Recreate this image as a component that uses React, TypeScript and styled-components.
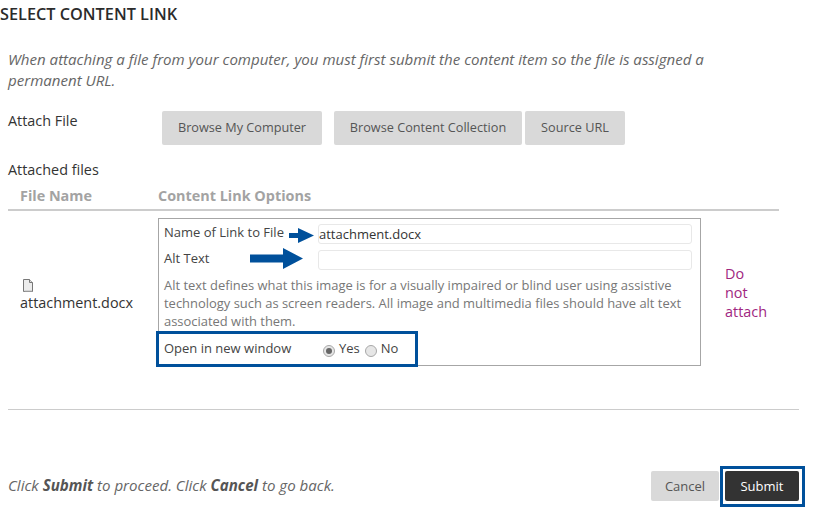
import React from 'react';
import styled, { createGlobalStyle } from 'styled-components';

const Global = createGlobalStyle`
  html, body {
    margin: 0;
    background: #fff;
    font-family: "Open Sans", "Liberation Sans", sans-serif;
  }
`;

const Page = styled.div`
  width: 822px;
  height: 520px;
  overflow: hidden;
  position: relative;
  color: #333;
`;

const Title = styled.h1`
  margin: 0;
  padding-top: 5px;
  font-size: 16.3px;
  line-height: 19px;
  font-weight: 600;
  color: #2b2b2b;
`;

const Intro = styled.p`
  margin: 25px 0 0 8px;
  width: 720px;
  font-size: 15.07px;
  line-height: 21px;
  font-style: italic;
  color: #666;
`;

const AttachRow = styled.div`
  display: flex;
  align-items: flex-start;
  margin: 20px 0 0 8px;
`;

const FieldLabel = styled.div`
  width: 154px;
  font-size: 14.4px;
  line-height: 20px;
  color: #333;
`;

const AttachButtons = styled.div`
  display: flex;
  gap: 12px;
`;

const GreyButton = styled.button<{ $width: number; $tight?: boolean }>`
  width: ${p => p.$width}px;
  height: 34px;
  margin-left: ${p => (p.$tight ? -9 : 0)}px;
  padding: 0 0 2px;
  border: none;
  border-radius: 2px;
  background: #d9d9d9;
  color: #555;
  font: 12.7px "Open Sans", sans-serif;
`;

const AttachedLabel = styled(FieldLabel)`
  margin: 15px 0 0 8px;
  width: auto;
`;

const HeaderRow = styled.div`
  display: flex;
  align-items: center;
  height: 28px;
  margin: 1px 43px 0 8px;
  padding-left: 12px;
  border-bottom: 2px solid #ccc;
  font-size: 14.4px;
  font-weight: 700;
  color: #a3a3a3;
`;

const NameHeader = styled.div`
  width: 138px;
`;

const FileRow = styled.div`
  display: flex;
  align-items: flex-start;
  margin: 7px 0 0 20px;
`;

const FileCell = styled.div`
  width: 138px;
  padding-top: 61px;
  font-size: 14.4px;
  line-height: 20px;
  color: #333;
`;

const FileIcon = styled.svg`
  display: block;
  width: 12px;
  height: 13px;
  margin: 0 0 1px 2px;
`;

const OptionsBox = styled.div`
  position: relative;
  box-sizing: border-box;
  width: 543px;
  height: 148px;
  border: 1px solid #a6a6a6;
  padding: 5px 8px 0 5px;
  font-size: 13px;
  color: #444;
`;

const OptionRow = styled.div`
  display: flex;
  align-items: center;
  height: 20px;
  margin-bottom: 6px;
`;

const OptionLabel = styled.div`
  width: 154px;
  margin-top: -3px;
  line-height: 17px;
`;

const TextBox = styled.div`
  box-sizing: border-box;
  flex: 1;
  height: 20px;
  border: 1px solid #e8e8e8;
  border-radius: 3px;
  font-size: 13px;
  line-height: 19px;
  color: #333;
`;

const Help = styled.p`
  margin: 1px 0 0;
  font-size: 12.95px;
  line-height: 18px;
  color: #777;
`;

const Arrow = styled.svg<{ $left: number; $top: number; $width: number; $height: number }>`
  position: absolute;
  left: ${p => p.$left}px;
  top: ${p => p.$top}px;
  width: ${p => p.$width}px;
  height: ${p => p.$height}px;
`;

const WindowRow = styled.div`
  position: absolute;
  left: -3px;
  top: 112px;
  box-sizing: border-box;
  width: 262px;
  height: 36px;
  border: 3px solid #00509b;
  background: #fff;
  display: flex;
  align-items: center;
  padding: 0 0 3px 5px;
  font-size: 13px;
  color: #444;
`;

const WindowLabel = styled.div`
  width: 159px;
`;

const RadioLabel = styled.div`
  display: flex;
  align-items: center;
  margin-right: 5px;
`;

const Radio = styled.span<{ $on?: boolean }>`
  position: relative;
  top: 3px;
  box-sizing: border-box;
  width: 12px;
  height: 12px;
  margin-right: 4px;
  border: 1px solid #a8a8a8;
  border-radius: 50%;
  background: #e6e6e6;
  display: flex;
  align-items: center;
  justify-content: center;
  &::after {
    content: '';
    display: ${p => (p.$on ? 'block' : 'none')};
    width: 6px;
    height: 6px;
    border-radius: 50%;
    background: #666;
  }
`;

const RemoveLink = styled.div`
  width: 44px;
  margin: 46px 0 0 24px;
  font-size: 14.4px;
  line-height: 19px;
  color: #a0267f;
`;

const Divider = styled.hr`
  margin: 43px 23px 0 8px;
  border: none;
  border-top: 1px solid #ccc;
`;

const Footer = styled.div`
  display: flex;
  align-items: center;
  justify-content: space-between;
  margin: 61px 23px 0 8px;
  height: 30px;
`;

const FooterNote = styled.div`
  margin-top: -3px;
  font-size: 15.1px;
  font-style: italic;
  color: #666;
  b {
    font-weight: 700;
    color: #555;
  }
`;

const FooterActions = styled.div`
  display: flex;
  gap: 6px;
`;

const SubmitButton = styled.button`
  position: relative;
  width: 74px;
  height: 30px;
  padding: 0;
  border: none;
  border-radius: 2px;
  background: #333;
  color: #fff;
  font: 13px "Open Sans", sans-serif;
  &::after {
    content: '';
    position: absolute;
    inset: -5px -6px -6px -5px;
    border: 3px solid #00509b;
  }
`;

const CancelButton = styled(GreyButton)`
  height: 30px;
  padding: 0;
  font-size: 13px;
`;

const App: React.FC = () => (
  <Page>
    <Global />
    <Title>SELECT CONTENT LINK</Title>
    <Intro>
      When attaching a file from your computer, you must first submit the content item so the file
      is assigned a permanent URL.
    </Intro>
    <AttachRow>
      <FieldLabel>Attach File</FieldLabel>
      <AttachButtons>
        <GreyButton $width={160}>Browse My Computer</GreyButton>
        <GreyButton $width={188}>Browse Content Collection</GreyButton>
        <GreyButton $width={100} $tight>Source URL</GreyButton>
      </AttachButtons>
    </AttachRow>
    <AttachedLabel>Attached files</AttachedLabel>
    <HeaderRow>
      <NameHeader>File Name</NameHeader>
      <div>Content Link Options</div>
    </HeaderRow>
    <FileRow>
      <FileCell>
        <FileIcon viewBox="0 0 12 13">
          <path d="M1.5.5h6l3 3v9h-9z" fill="#ececec" stroke="#777" />
          <path d="M7.5.5v3h3" fill="#ddd" stroke="#777" />
          <path d="M2.5 12h7.5" stroke="#bbb" />
        </FileIcon>
        attachment.docx
      </FileCell>
      <OptionsBox>
        <OptionRow>
          <OptionLabel>Name of Link to File</OptionLabel>
          <TextBox>attachment.docx</TextBox>
        </OptionRow>
        <OptionRow>
          <OptionLabel>Alt Text</OptionLabel>
          <TextBox />
        </OptionRow>
        <Help>
          Alt text defines what this image is for a visually impaired or blind user using assistive
          technology such as screen readers. All image and multimedia files should have alt text
          associated with them.
        </Help>
        <Arrow $left={130} $top={9} $width={25} $height={15} viewBox="0 0 25 15">
          <path d="M0 5h9V0l16 7.5L9 15v-5H0z" fill="#00509b" />
        </Arrow>
        <Arrow $left={91} $top={29} $width={53} $height={21} viewBox="0 0 53 21">
          <path d="M0 6.5h33V0l20 10.5L33 21v-6.5H0z" fill="#00509b" />
        </Arrow>
        <WindowRow>
          <WindowLabel>Open in new window</WindowLabel>
          <RadioLabel><Radio $on />Yes</RadioLabel>
          <RadioLabel><Radio />No</RadioLabel>
        </WindowRow>
      </OptionsBox>
      <RemoveLink>Do not attach</RemoveLink>
    </FileRow>
    <Divider />
    <Footer>
      <FooterNote>
        Click <b>Submit</b> to proceed. Click <b>Cancel</b> to go back.
      </FooterNote>
      <FooterActions>
        <CancelButton $width={68}>Cancel</CancelButton>
        <SubmitButton>Submit</SubmitButton>
      </FooterActions>
    </Footer>
  </Page>
);

export default App;
